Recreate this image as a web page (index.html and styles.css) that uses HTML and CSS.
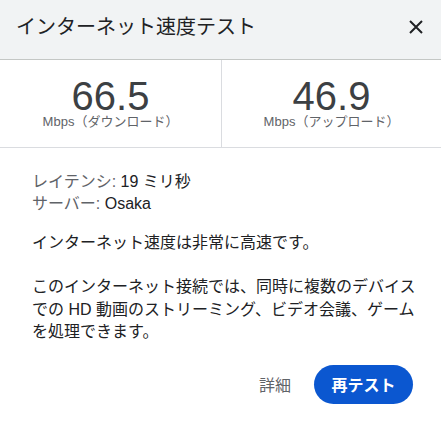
FILE: index.html
```html
<!DOCTYPE html>
<html lang="ja">
<head>
<meta charset="utf-8">
<link rel="stylesheet" href="styles.css">
</head>
<body>
<div class="dialog">
  <header class="head">
    <h1 class="title">インターネット速度テスト</h1>
    <button class="close" aria-label="閉じる">
      <svg width="14" height="14" viewBox="0 0 14 14"><path d="M1 1L13 13M13 1L1 13" stroke="#202124" stroke-width="2" fill="none"/></svg>
    </button>
  </header>
  <section class="stats">
    <div class="stat">
      <div class="num">66.5</div>
      <div class="unit">Mbps（ダウンロード）</div>
    </div>
    <div class="stat">
      <div class="num">46.9</div>
      <div class="unit">Mbps（アップロード）</div>
    </div>
  </section>
  <section class="body">
    <div class="meta">
      <div><span class="label">レイテンシ:</span> 19 ミリ秒</div>
      <div><span class="label">サーバー:</span> Osaka</div>
    </div>
    <p class="verdict">インターネット速度は非常に高速です。</p>
    <p class="desc">このインターネット接続では、同時に複数のデバイスでの HD 動画のストリーミング、ビデオ会議、ゲームを処理できます。</p>
    <div class="actions">
      <button class="link">詳細</button>
      <button class="primary">再テスト</button>
    </div>
  </section>
</div>
</body>
</html>
```

FILE: styles.css
```css
* { box-sizing: border-box; }
html, body { margin: 0; padding: 0; background: #fff; }
body {
  font-family: "Liberation Sans", Arial, "Noto Sans CJK JP", sans-serif;
  color: #202124;
  width: 441px;
  height: 425px;
  overflow: hidden;
}
.dialog { width: 441px; }
.head {
  height: 60px;
  background: #f1f3f4;
  border-bottom: 1px solid #c4c7c5;
  display: flex;
  align-items: center;
  justify-content: space-between;
  padding: 0 18px 6px 16px;
}
.title {
  margin: 0;
  font-size: 20px;
  font-weight: normal;
  line-height: 24px;
  color: #202124;
}
.close {
  border: 0;
  background: none;
  padding: 0;
  width: 14px;
  height: 14px;
  display: flex;
}
.stats {
  display: grid;
  grid-template-columns: 221px 1fr;
  height: 88px;
  border-bottom: 1px solid #dadce0;
}
.stat {
  text-align: center;
  padding-top: 18px;
}
.stat + .stat { border-left: 1px solid #dadce0; }
.num {
  font-size: 40px;
  line-height: 36px;
  color: #3c4043;
}
.unit {
  font-size: 13px;
  line-height: 16px;
  color: #5f6368;
}
.body {
  padding: 23px 18px 0 32px;
  font-size: 16px;
}
.meta { line-height: 22px; }
.label { color: #5f6368; }
.verdict {
  margin: 17px 0 0;
  line-height: 22px;
}
.desc {
  margin: 22px 0 0;
  line-height: 22.5px;
}
.actions {
  margin-top: 21px;
  padding-right: 10px;
  display: flex;
  justify-content: flex-end;
  align-items: center;
  gap: 23px;
}
.link {
  border: 0;
  background: none;
  padding: 0;
  font: inherit;
  font-size: 16px;
  color: #5f6368;
}
.primary {
  border: 0;
  height: 39px;
  width: 99px;
  border-radius: 20px;
  background: #0b57d0;
  color: #fff;
  font: inherit;
  font-size: 16px;
  font-weight: bold;
  padding: 0;
}
```
